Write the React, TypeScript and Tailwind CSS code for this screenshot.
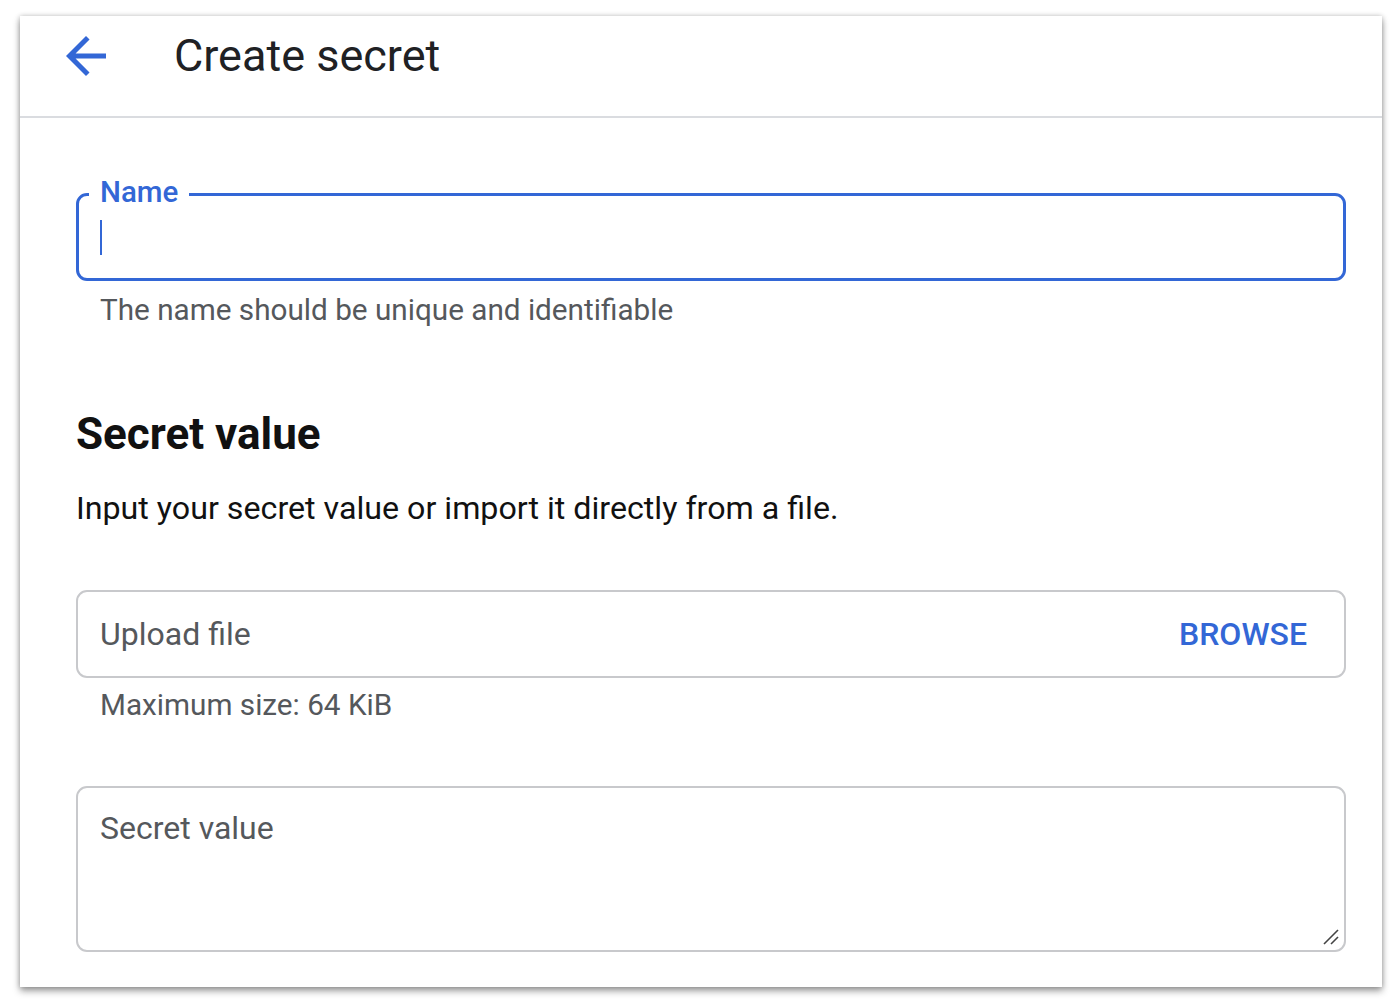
export default function App() {
  return (
    <div
      className="min-h-screen w-[1400px] bg-white pt-[16px]"
      style={{ fontFamily: "Roboto, 'Liberation Sans', sans-serif" }}
    >
      <div className="ml-[20px] w-[1362px] h-[971px] bg-white shadow-[0_4px_7px_rgba(0,0,0,0.38),0_0_5px_rgba(0,0,0,0.2)]">
        <header className="h-[102px] border-b-2 border-[#dadce0] pt-[16px]">
          <div className="flex h-[48px] items-center">
            <svg
              viewBox="0 0 24 24"
              className="ml-[36px] h-[60px] w-[60px] fill-[#3367d6]"
            >
              <path d="M20 11H7.83l5.59-5.59L12 4l-8 8 8 8 1.41-1.41L7.83 13H20v-2z" />
            </svg>
            <h1 className="ml-[58px] text-[45px] leading-[52px] text-[#202124]">
              Create secret
            </h1>
          </div>
        </header>

        <div className="pl-[56px] pr-[36px]">
          <div className="relative mt-[75px] h-[88px] rounded-[11px] border-[3px] border-[#3367d6]">
            <span className="absolute left-[10px] top-[-4px] -translate-y-1/2 bg-white px-[11px] text-[29.5px] font-medium leading-[32px] text-[#3367d6]">
              Name
            </span>
            <div className="ml-[21px] mt-[24px] h-[35px] w-[2px] bg-[#3367d6]" />
          </div>
          <p className="mt-[13px] pl-[24px] text-[29.7px] leading-[32px] text-[#55585c]">
            The name should be unique and identifiable
          </p>

          <h2 className="mt-[82px] text-[44px] font-bold leading-[52px] text-[#111]">
            Secret value
          </h2>
          <p className="mt-[30px] text-[32.2px] leading-[36px] text-[#111]">
            Input your secret value or import it directly from a file.
          </p>

          <div className="mt-[64px] flex h-[88px] items-center justify-between rounded-[11px] border-2 border-[#c8c9cc] pl-[22px] pr-[37px]">
            <span className="text-[32px] leading-[36px] text-[#55585c]">Upload file</span>
            <span className="text-[32px] font-medium leading-[36px] text-[#3367d6]">BROWSE</span>
          </div>
          <p className="mt-[11px] pl-[24px] text-[29.7px] leading-[32px] text-[#55585c]">
            Maximum size: 64 KiB
          </p>

          <div className="relative mt-[65px] h-[166px] rounded-[11px] border-2 border-[#c8c9cc] pl-[22px] pt-[22px]">
            <span className="text-[32px] leading-[36px] text-[#55585c]">Secret value</span>
            <svg
              viewBox="0 0 20 20"
              className="absolute bottom-[3px] right-[3px] h-[20px] w-[20px]"
            >
              <line x1="3" y1="17" x2="17" y2="3" stroke="#444" strokeWidth="1.6" />
              <line x1="10" y1="17" x2="17" y2="10" stroke="#444" strokeWidth="1.6" />
            </svg>
          </div>
        </div>
      </div>
    </div>
  );
}
